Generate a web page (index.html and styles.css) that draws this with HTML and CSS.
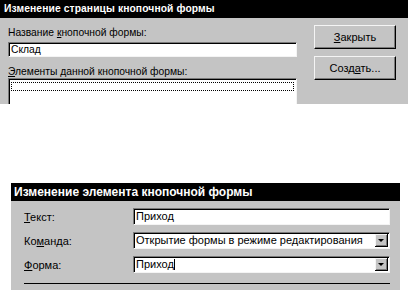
FILE: index.html
```html
<!DOCTYPE html>
<html lang="ru">
<head>
    <meta charset="UTF-8">
    <title>Диспетчер кнопочных форм</title>
    <link rel="stylesheet" href="styles.css">
</head>
<body>

<div class="dialog page-dialog">
    <div class="titlebar">Изменение страницы кнопочной формы</div>
    <div class="dialog-body">
        <div class="fields">
            <div class="label">Название <u>к</u>нопочной формы:</div>
            <div class="textbox">Склад</div>
            <div class="label second"><u>Э</u>лементы данной кнопочной формы:</div>
            <div class="listbox">
                <div class="focus-row"></div>
            </div>
        </div>
        <div class="actions">
            <button class="btn"><u>З</u>акрыть</button>
            <button class="btn">Созд<u>а</u>ть...</button>
        </div>
    </div>
</div>

<div class="dialog item-dialog">
    <div class="titlebar wide">Изменение элемента кнопочной формы</div>
    <div class="item-body">
        <div class="row">
            <div class="row-label"><u>Т</u>екст:</div>
            <div class="textbox field">Приход</div>
        </div>
        <div class="row">
            <div class="row-label">Ко<u>м</u>анда:</div>
            <div class="textbox field combo">
                <span>Открытие формы в режиме редактирования</span>
                <span class="drop"><span class="arrow"></span></span>
            </div>
        </div>
        <div class="row">
            <div class="row-label"><u>Ф</u>орма:</div>
            <div class="textbox field combo">
                <span>Приход<span class="caret"></span></span>
                <span class="drop"><span class="arrow"></span></span>
            </div>
        </div>
        <div class="footer-line"></div>
    </div>
</div>

</body>
</html>
```

FILE: styles.css
```css
body {
    margin: 0;
    background: #ffffff;
    font-family: "Liberation Sans", Arial, sans-serif;
    font-size: 10.3px;
    color: #000000;
    overflow: hidden;
}
u {
    text-decoration: underline;
    text-underline-offset: 1px;
}
.dialog {
    background: #c4c4c4;
}
.page-dialog {
    height: 104px;
    overflow: hidden;
}
.titlebar {
    background: #000000;
    color: #ffffff;
    font-weight: bold;
    font-size: 10.3px;
    height: 18px;
    line-height: 18px;
    padding-left: 4px;
    letter-spacing: 0.1px;
    white-space: nowrap;
}
.dialog-body {
    display: flex;
    padding: 0 12px 0 8px;
}
.fields {
    width: 289px;
    padding-top: 8px;
}
.label {
    height: 13px;
    line-height: 13px;
    margin-bottom: 3px;
}
.label.second {
    margin-top: 8px;
    margin-bottom: 0;
}
.textbox {
    background: #ffffff;
    height: 11px;
    line-height: 11px;
    padding: 1px 2px;
    border-top: 1px solid #7a7a7a;
    border-left: 1px solid #7a7a7a;
    border-right: 1px solid #f4f4f4;
    border-bottom: 1px solid #f4f4f4;
    box-shadow: inset 1px 1px 0 #000000;
    white-space: nowrap;
}
.listbox {
    background: #ffffff;
    height: 40px;
    border-top: 1px solid #7a7a7a;
    border-left: 1px solid #7a7a7a;
    border-right: 1px solid #f4f4f4;
    box-shadow: inset 1px 1px 0 #000000;
    padding: 3px 2px 0 2px;
}
.focus-row {
    height: 7px;
    border: 1px dotted #000000;
}
.actions {
    margin-left: auto;
    display: flex;
    flex-direction: column;
    gap: 7px;
    padding-top: 7px;
}
.btn {
    width: 82px;
    height: 24px;
    background: #c4c4c4;
    font-family: "Liberation Sans", Arial, sans-serif;
    font-size: 11px;
    color: #000000;
    border-top: 1px solid #f4f4f4;
    border-left: 1px solid #f4f4f4;
    border-right: 1px solid #000000;
    border-bottom: 1px solid #000000;
    box-shadow: inset -1px -1px 0 #7a7a7a;
    padding: 0;
}
.item-dialog {
    margin: 79px 0 0 11px;
    width: 389px;
    height: 120px;
}
.titlebar.wide {
    font-size: 12px;
    letter-spacing: 0;
    padding-left: 3px;
}
.item-body {
    padding: 7px 10px 0 13px;
}
.row {
    display: flex;
    align-items: center;
    margin-bottom: 7px;
}
.row-label {
    width: 109px;
    font-size: 11px;
}
.textbox.field {
    flex: 1;
    height: 13px;
    line-height: 13px;
    font-size: 11px;
}
.combo {
    display: flex;
    justify-content: space-between;
    align-items: center;
    padding-right: 1px;
}
.drop {
    width: 13px;
    height: 13px;
    background: #c4c4c4;
    border-right: 1px solid #000000;
    border-bottom: 1px solid #000000;
    box-shadow: inset 1px 1px 0 #f4f4f4, inset -1px -1px 0 #7a7a7a;
    box-sizing: border-box;
    display: flex;
    align-items: center;
    justify-content: center;
}
.arrow {
    width: 0;
    height: 0;
    border-left: 3px solid transparent;
    border-right: 3px solid transparent;
    border-top: 3px solid #000000;
}
.caret {
    display: inline-block;
    width: 1px;
    height: 11px;
    background: #000000;
    vertical-align: -2px;
}
.footer-line {
    margin-top: 10px;
    height: 1px;
    background: #000000;
}
```
